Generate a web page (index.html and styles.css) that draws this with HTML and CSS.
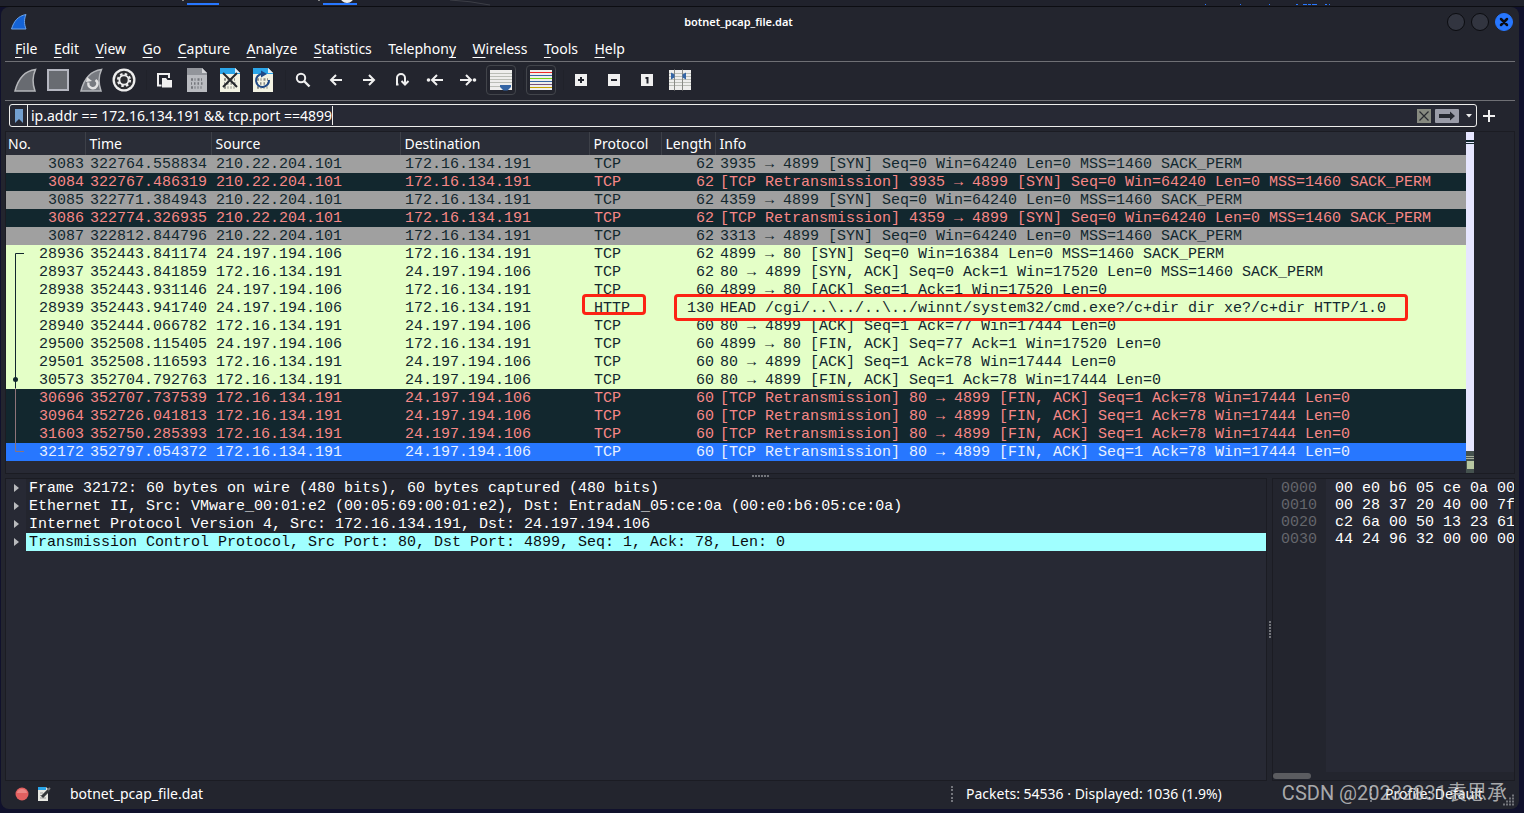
FILE: index.html
```html
<!DOCTYPE html>
<html lang="en">
<head>
<meta charset="utf-8">
<title>botnet_pcap_file.dat</title>
<link rel="stylesheet" href="styles.css">
</head>
<body>
<div class="desktop-strip" aria-hidden="true">
  <svg width="720" height="7" viewBox="0 0 720 7"><path d="M187 4h32M323 4h34" stroke="#2777ff" stroke-width="2"/><circle cx="347" cy="-4" r="7" fill="#eee"/><path d="M450 0q20 1 40 5" stroke="#3c3e46" fill="none"/><path d="M182 0h2M318 0h2" stroke="#888" stroke-width="2"/></svg>
  <svg width="324" height="7" viewBox="0 0 324 7"><path d="M5 4.500h1M40 4.500h1M69 4.500h1M96 4.500h2M103 4.500h4M108 4.500h3M112 4.500h5M125 4.500h2M129 4.500h1" stroke="#2777ff"/></svg>
</div>
<main class="window">
  <header class="titlebar">
    <svg class="app-icon" width="18" height="18" viewBox="0 0 18 18"><path d="M1.500 16C4 8 8 3 16 1.500C14 6 14 11 16 16Z" fill="#1463d6" stroke="#6da3e8"/></svg>
    <h1 class="title">botnet_pcap_file.dat</h1>
    <div class="controls">
      <button class="ctl" aria-label="Minimize"></button>
      <button class="ctl" aria-label="Maximize"></button>
      <button class="ctl close" aria-label="Close"><svg width="10" height="10" viewBox="0 0 10 10"><path d="M2 2l6 6M8 2l-6 6" stroke="#0b0d14" stroke-width="2.500" stroke-linecap="round"/></svg></button>
    </div>
  </header>
  <nav class="menu">
    <div class="menu-items">
      <button><u>F</u>ile</button><button><u>E</u>dit</button><button><u>V</u>iew</button><button><u>G</u>o</button><button><u>C</u>apture</button><button><u>A</u>nalyze</button><button><u>S</u>tatistics</button><button>Telephon<u>y</u></button><button><u>W</u>ireless</button><button><u>T</u>ools</button><button><u>H</u>elp</button>
    </div>
  </nav>
  <div class="toolbar">
    <button aria-label="Start capture"><svg width="24" height="24" viewBox="0 0 24 24"><path d="M2 23C5 11 11 3 22.500 1.500C19.500 8 19.500 16 22 23Z" fill="#686b71" stroke="#b4b6ba" stroke-width="1.500"/></svg></button>
    <button aria-label="Stop capture"><svg width="24" height="24" viewBox="0 0 24 24"><path d="M2 2h20v20H2z" fill="#686b71" stroke="#b4b6c0" stroke-width="2"/></svg></button>
    <button aria-label="Restart capture"><svg width="24" height="24" viewBox="0 0 24 24"><path d="M2 23C5 11 11 3 22.500 1.500C19.500 8 19.500 16 22 23Z" fill="#777a80" stroke="#b4b6ba" stroke-width="1.500"/><path d="M9.500 14.500a4.500 4.500 0 1 0 7-2.500" fill="none" stroke="#e2e2e2" stroke-width="2.400"/><path d="M7 14l1-5 5 4z" fill="#e2e2e2"/></svg></button>
    <button aria-label="Capture options"><svg width="24" height="24" viewBox="0 0 24 24"><circle cx="12" cy="12" r="11.500" fill="#eee"/><circle cx="12" cy="12" r="9.200" fill="#2c2d30"/><circle cx="12" cy="12" r="6" fill="none" stroke="#eee" stroke-width="2.200" stroke-dasharray="2.500 2.212"/><circle cx="12" cy="12" r="4.600" fill="none" stroke="#eee" stroke-width="1.800"/></svg></button>
    <span class="sep"></span>
    <button aria-label="Open"><svg width="24" height="24" viewBox="0 0 24 24"><path d="M9.500 17.500H6V6h11v4" fill="none" stroke="#f0f0f0" stroke-width="2"/><path d="M10 10h4l1.500 2H20v7.500H10z" fill="#f0f0f0"/></svg></button>
    <button aria-label="Save"><svg width="24" height="24" viewBox="0 0 24 24"><path d="M2 0h15l5 5v19H2z" fill="#b9bbc0"/><path d="M2 0h15v5h5v2H2z" fill="#92959b"/><path d="M17 0l5 5h-5z" fill="#d5d6d9"/><path d="M6 11.500h2m1.500 0h1m2 0h2m1.500 0h1M6 15.500h1m2 0h1.500m2 0h1.500m2 0h1.500M6 19.500h2m1.500 0h1m2 0h1m2 0h1" stroke="#74777c" stroke-width="2.600"/></svg></button>
    <button aria-label="Close file"><svg width="24" height="24" viewBox="0 0 24 24"><path d="M2 0h15l5 5v19H2z" fill="#f3f3e3"/><path d="M2 0h15v5h5v1H2z" fill="#2ba5e8"/><path d="M17 0l5 5h-5z" fill="#dff0f8"/><path d="M6 11.500h2m1.500 0h1m2 0h2m1.500 0h1M6 15.500h1m2 0h1.500m2 0h1.500m2 0h1.500M6 19.500h2m1.500 0h1m2 0h1m2 0h1" stroke="#8c8d87" stroke-width="2.600"/><path d="M5 5l14 14M19 5L5 19" stroke="#25282b" stroke-width="2"/></svg></button>
    <button aria-label="Reload"><svg width="24" height="24" viewBox="0 0 24 24"><path d="M2 0h15l5 5v19H2z" fill="#f3f3e3"/><path d="M2 0h15v5h5v1H2z" fill="#2ba5e8"/><path d="M17 0l5 5h-5z" fill="#dff0f8"/><path d="M6 11.500h2m1.500 0h1m2 0h2m1.500 0h1M6 15.500h1m2 0h1.500m2 0h1.500m2 0h1.500M6 19.500h2m1.500 0h1m2 0h1m2 0h1" stroke="#8c8d87" stroke-width="2.600"/><path d="M11 6a6.500 6.500 0 1 0 7 6" fill="none" stroke="#204a87" stroke-width="2"/><path d="M10 2.500l6 3.500-6 3.500z" fill="#204a87"/></svg></button>
    <span class="sep"></span>
    <button aria-label="Find"><svg width="24" height="24" viewBox="0 0 24 24"><circle cx="10" cy="10" r="4.200" fill="none" stroke="#f0f0f0" stroke-width="2"/><path d="M13 13l5.500 5.500" stroke="#f0f0f0" stroke-width="2.400"/></svg></button>
    <button aria-label="Previous"><svg width="24" height="24" viewBox="0 0 24 24"><path d="M18 12H7.500M12 7l-5 5 5 5" fill="none" stroke="#f0f0f0" stroke-width="2"/></svg></button>
    <button aria-label="Next"><svg width="24" height="24" viewBox="0 0 24 24"><path d="M6 12h10.500M12 7l5 5-5 5" fill="none" stroke="#f0f0f0" stroke-width="2"/></svg></button>
    <button aria-label="Go to packet"><svg width="24" height="24" viewBox="0 0 24 24"><path d="M8.500 16.500H7V10a4 4 0 0 1 8 0v6M11.500 13l3.500 3.500 3.500-3.500" fill="none" stroke="#f0f0f0" stroke-width="2"/></svg></button>
    <button aria-label="First packet"><svg width="24" height="24" viewBox="0 0 24 24"><circle cx="5.500" cy="12" r="1.800" fill="#f0f0f0"/><path d="M20 12H10M14 7l-5 5 5 5" fill="none" stroke="#f0f0f0" stroke-width="2"/></svg></button>
    <button aria-label="Last packet"><svg width="24" height="24" viewBox="0 0 24 24"><circle cx="18.500" cy="12" r="1.800" fill="#f0f0f0"/><path d="M4 12h10M10 7l5 5-5 5" fill="none" stroke="#f0f0f0" stroke-width="2"/></svg></button>
    <button class="on" aria-label="Auto scroll"><svg width="24" height="24" viewBox="0 0 24 24"><path d="M1 2h22v20H1z" fill="#eeeeec"/><path d="M1 5.500h22M1 8.500h22M1 11.500h22M1 14.500h22M1 18.500h10" stroke="#babdb6"/><path d="M11 17h11v2l-3.500 3.500h-4L11 19z" fill="#3465a4"/></svg></button>
    <span class="sep"></span>
    <button class="on" aria-label="Colorize"><svg width="24" height="24" viewBox="0 0 24 24"><path d="M1 2h22v20H1z" fill="#eeeeec"/><path d="M1 4h22v1H1z" fill="#ef2929"/><path d="M1 7h22v1H1zM1 13h22v1H1z" fill="#3465a4"/><path d="M1 10h22v1H1z" fill="#73d216"/><path d="M1 16h22v1H1z" fill="#75507b"/><path d="M1 19h22v1H1z" fill="#c4a000"/></svg></button>
    <span class="sep"></span>
    <button aria-label="Zoom in"><svg width="24" height="24" viewBox="0 0 24 24"><path d="M6 6h12v12H6z" fill="#f0f0f0"/><path d="M9 12h6M12 9v6" stroke="#22242d" stroke-width="2"/></svg></button>
    <button aria-label="Zoom out"><svg width="24" height="24" viewBox="0 0 24 24"><path d="M6 6h12v12H6z" fill="#f0f0f0"/><path d="M9 12h6" stroke="#22242d" stroke-width="2"/></svg></button>
    <button aria-label="Normal size"><svg width="24" height="24" viewBox="0 0 24 24"><path d="M6 6h12v12H6z" fill="#f0f0f0"/><path d="M10.500 10h2v5.500" fill="none" stroke="#22242d" stroke-width="2"/></svg></button>
    <button aria-label="Resize columns"><svg width="24" height="24" viewBox="0 0 24 24"><path d="M1 2h22v20H1z" fill="#eeeeec"/><path d="M1 5.500h22M1 8.500h22M1 11.500h22M1 14.500h22M1 17.500h22" stroke="#babdb6"/><path d="M6.500 1.500v21M14.500 1.500v21" stroke="#888a85"/><path d="M3 4.500l3.500 2v3L3 11.500zM18 4.500l-3.500 2v3l3.500 2z" fill="#3465a4"/></svg></button>
  </div>
  <div class="filterbar">
    <div class="filterbox">
      <button class="bookmark" aria-label="Bookmarks"><svg width="10" height="14" viewBox="0 0 10 14"><path d="M1 0h8v14L5 10 1 14z" fill="#729fcf"/></svg></button>
      <input class="filter" type="text" aria-label="Display filter" value="ip.addr == 172.16.134.191 &amp;&amp; tcp.port ==4899">
      <button class="right" aria-label="Clear"><svg width="14" height="14" viewBox="0 0 14 14"><path d="M0 0h14v14H0z" fill="#878a80"/><path d="M2.500 2.500l9 9M11.500 2.500l-9 9" stroke="#292b30" stroke-width="1.200"/></svg></button>
      <button aria-label="Apply"><svg width="24" height="14" viewBox="0 0 24 14"><rect width="24" height="14" rx="1" fill="#9a9ca8"/><path d="M4 5h11V2.500L20 7l-5 4.500V9H4z" fill="#252830"/></svg></button>
      <button class="recent" aria-label="Recent filters"><svg width="8" height="6" viewBox="0 0 8 6"><path d="M1 1h6L4 4.500z" fill="#eee"/></svg></button>
    </div>
    <button aria-label="Add filter"><svg width="14" height="14" viewBox="0 0 14 14"><path d="M1 7h12M7 1v12" stroke="#f0f0f0" stroke-width="2"/></svg></button>
  </div>
  <section class="packets" aria-label="Packet list">
    <div class="list">
      <table>
        <colgroup><col class="c-no"><col class="c-time"><col class="c-addr"><col class="c-addr"><col class="c-proto"><col class="c-len"><col></colgroup>
        <thead><tr><th>No.</th><th>Time</th><th>Source</th><th>Destination</th><th>Protocol</th><th>Length</th><th>Info</th></tr></thead>
        <tbody>
          <tr class="syn"><td>3083</td><td>322764.558834</td><td>210.22.204.101</td><td>172.16.134.191</td><td>TCP</td><td>62</td><td>3935 → 4899 [SYN] Seq=0 Win=64240 Len=0 MSS=1460 SACK_PERM</td></tr>
          <tr class="bad"><td>3084</td><td>322767.486319</td><td>210.22.204.101</td><td>172.16.134.191</td><td>TCP</td><td>62</td><td>[TCP Retransmission] 3935 → 4899 [SYN] Seq=0 Win=64240 Len=0 MSS=1460 SACK_PERM</td></tr>
          <tr class="syn"><td>3085</td><td>322771.384943</td><td>210.22.204.101</td><td>172.16.134.191</td><td>TCP</td><td>62</td><td>4359 → 4899 [SYN] Seq=0 Win=64240 Len=0 MSS=1460 SACK_PERM</td></tr>
          <tr class="bad"><td>3086</td><td>322774.326935</td><td>210.22.204.101</td><td>172.16.134.191</td><td>TCP</td><td>62</td><td>[TCP Retransmission] 4359 → 4899 [SYN] Seq=0 Win=64240 Len=0 MSS=1460 SACK_PERM</td></tr>
          <tr class="syn"><td>3087</td><td>322812.844796</td><td>210.22.204.101</td><td>172.16.134.191</td><td>TCP</td><td>62</td><td>3313 → 4899 [SYN] Seq=0 Win=64240 Len=0 MSS=1460 SACK_PERM</td></tr>
          <tr class="http"><td>28936</td><td>352443.841174</td><td>24.197.194.106</td><td>172.16.134.191</td><td>TCP</td><td>62</td><td>4899 → 80 [SYN] Seq=0 Win=16384 Len=0 MSS=1460 SACK_PERM</td></tr>
          <tr class="http"><td>28937</td><td>352443.841859</td><td>172.16.134.191</td><td>24.197.194.106</td><td>TCP</td><td>62</td><td>80 → 4899 [SYN, ACK] Seq=0 Ack=1 Win=17520 Len=0 MSS=1460 SACK_PERM</td></tr>
          <tr class="http"><td>28938</td><td>352443.931146</td><td>24.197.194.106</td><td>172.16.134.191</td><td>TCP</td><td>60</td><td>4899 → 80 [ACK] Seq=1 Ack=1 Win=17520 Len=0</td></tr>
          <tr class="http"><td>28939</td><td>352443.941740</td><td>24.197.194.106</td><td>172.16.134.191</td><td>HTTP</td><td>130</td><td>HEAD /cgi/..\../..\../winnt/system32/cmd.exe?/c+dir dir xe?/c+dir HTTP/1.0</td></tr>
          <tr class="http"><td>28940</td><td>352444.066782</td><td>172.16.134.191</td><td>24.197.194.106</td><td>TCP</td><td>60</td><td>80 → 4899 [ACK] Seq=1 Ack=77 Win=17444 Len=0</td></tr>
          <tr class="http"><td>29500</td><td>352508.115405</td><td>24.197.194.106</td><td>172.16.134.191</td><td>TCP</td><td>60</td><td>4899 → 80 [FIN, ACK] Seq=77 Ack=1 Win=17520 Len=0</td></tr>
          <tr class="http"><td>29501</td><td>352508.116593</td><td>172.16.134.191</td><td>24.197.194.106</td><td>TCP</td><td>60</td><td>80 → 4899 [ACK] Seq=1 Ack=78 Win=17444 Len=0</td></tr>
          <tr class="http"><td>30573</td><td>352704.792763</td><td>172.16.134.191</td><td>24.197.194.106</td><td>TCP</td><td>60</td><td>80 → 4899 [FIN, ACK] Seq=1 Ack=78 Win=17444 Len=0</td></tr>
          <tr class="bad"><td>30696</td><td>352707.737539</td><td>172.16.134.191</td><td>24.197.194.106</td><td>TCP</td><td>60</td><td>[TCP Retransmission] 80 → 4899 [FIN, ACK] Seq=1 Ack=78 Win=17444 Len=0</td></tr>
          <tr class="bad"><td>30964</td><td>352726.041813</td><td>172.16.134.191</td><td>24.197.194.106</td><td>TCP</td><td>60</td><td>[TCP Retransmission] 80 → 4899 [FIN, ACK] Seq=1 Ack=78 Win=17444 Len=0</td></tr>
          <tr class="bad"><td>31603</td><td>352750.285393</td><td>172.16.134.191</td><td>24.197.194.106</td><td>TCP</td><td>60</td><td>[TCP Retransmission] 80 → 4899 [FIN, ACK] Seq=1 Ack=78 Win=17444 Len=0</td></tr>
          <tr class="selected"><td>32172</td><td>352797.054372</td><td>172.16.134.191</td><td>24.197.194.106</td><td>TCP</td><td>60</td><td>[TCP Retransmission] 80 → 4899 [FIN, ACK] Seq=1 Ack=78 Win=17444 Len=0</td></tr>
        </tbody>
      </table>
      <svg class="related" width="12" height="208" viewBox="0 0 12 208"><path d="M11 4.500H2.500V139" fill="none" stroke="#12272e"/><path d="M2.500 139V202.500H11" fill="none" stroke="#8e7479"/><circle cx="2.500" cy="130.500" r="2.500" fill="#12272e"/></svg>
      <span class="mark mark-proto"></span>
      <span class="mark mark-info"></span>
    </div>
    <svg class="minimap" width="8" height="341" viewBox="0 0 8 341"><path d="M0 0h8v341H0z" fill="#e6e6ff"/><path d="M0 8h8v2H0zM0 11h8v1H0z" fill="#12272e"/><path d="M0 319h8v22H0z" fill="#45524f"/><path d="M0 324.500h8M0 326.500h8" stroke="#a9b09e"/><path d="M1 329h7v8H1z" fill="#b7c6a1"/></svg>
    <div class="scroll-gutter"></div>
  </section>
  <div class="split-h"><i></i><i></i><i></i><i></i><i></i><i></i></div>
  <div class="lower">
    <section class="details" aria-label="Packet details">
      <ul>
        <li><span>Frame 32172: 60 bytes on wire (480 bits), 60 bytes captured (480 bits)</span></li>
        <li><span>Ethernet II, Src: VMware_00:01:e2 (00:05:69:00:01:e2), Dst: EntradaN_05:ce:0a (00:e0:b6:05:ce:0a)</span></li>
        <li><span>Internet Protocol Version 4, Src: 172.16.134.191, Dst: 24.197.194.106</span></li>
        <li class="current"><span>Transmission Control Protocol, Src Port: 80, Dst Port: 4899, Seq: 1, Ack: 78, Len: 0</span></li>
      </ul>
    </section>
    <div class="split-v"><i></i><i></i><i></i><i></i><i></i><i></i></div>
    <section class="hex" aria-label="Packet bytes">
      <div class="hexbody">
        <pre class="offsets">0000
0010
0020
0030</pre>
        <pre class="bytes">00 e0 b6 05 ce 0a 00
00 28 37 20 40 00 7f
c2 6a 00 50 13 23 61
44 24 96 32 00 00 00</pre>
      </div>
      <div class="hscroll"></div>
    </section>
  </div>
  <footer class="status">
    <button aria-label="Expert information"><svg width="14" height="14" viewBox="0 0 14 14"><circle cx="7" cy="7" r="6.500" fill="#e26060"/><path d="M2 6a5 4 0 0 1 10 0z" fill="#ec8684"/></svg></button>
    <button aria-label="Capture comments"><svg width="14" height="14" viewBox="0 0 14 14"><path d="M1 0h8l2 2v12H1z" fill="#e8e8e2"/><path d="M1 0h8v3H1z" fill="#2ba5e8"/><path d="M3 6h3M3 8.500h2M3 11h6" stroke="#999"/><path d="M5 10l7-7" stroke="#34373a" stroke-width="3"/><path d="M11 3l2-2" stroke="#777" stroke-width="2"/></svg></button>
    <span class="file">botnet_pcap_file.dat</span>
    <span class="counts">Packets: 54536 · Displayed: 1036 (1.9%)</span>
    <span class="profile">Profile: Default</span>
    <svg class="grip" width="12" height="12" viewBox="0 0 12 12"><path d="M9 1.500h2M6 4.500h5M3 7.500h8M0 10.500h11" stroke="#73757b" stroke-width="2" stroke-dasharray="2 1"/></svg>
  </footer>
</main>
<div class="watermark">CSDN @20232831袁思承</div>
</body>
</html>
```

FILE: styles.css
```css
* { box-sizing: border-box; }
body {
  margin: 0;
  height: 100vh;
  display: flex;
  flex-direction: column;
  overflow: hidden;
  background: #10112c;
  color: #fff;
  font: 14px/20px "Noto Sans", sans-serif;
}
button {
  display: flex;
  align-items: center;
  justify-content: center;
  margin: 0;
  padding: 0;
  border: 0;
  background: none;
  color: inherit;
  font: inherit;
}
svg { display: block; flex: none; }
.desktop-strip {
  display: flex;
  justify-content: space-between;
  height: 7px;
  background: #20222c;
  border-bottom: 1px solid #0c0d12;
}
.window {
  flex: 1;
  min-height: 0;
  display: flex;
  flex-direction: column;
  margin: 0 5px 4px 1px;
  padding: 0 4px;
  background: #23252e;
  border-radius: 8px;
}
.titlebar {
  display: grid;
  grid-template-columns: 1fr auto 1fr;
  align-items: center;
  height: 30px;
  padding: 0 2px 0 5px;
}
.title { margin: 0; padding-right: 46px; font-size: 11px; font-weight: 600; line-height: 20px; }
.controls { display: flex; justify-content: flex-end; gap: 6px; }
.ctl {
  width: 18px;
  height: 18px;
  border: 1px solid #0b0c10;
  border-radius: 50%;
  background: #323540;
}
.ctl.close { background: #2777ff; border-color: #2777ff; }
.menu {
  height: 25px;
  padding: 2px 10px 0;
  border-bottom: 1px solid #6f7075;
}
.menu-items { display: flex; justify-content: space-between; max-width: 610px; }
.menu button { display: block; }
.menu u { text-underline-offset: 3px; text-decoration-thickness: 1px; }
.toolbar {
  display: flex;
  align-items: center;
  height: 39px;
  padding: 0 3px 2px;
  border-bottom: 1px solid #6f7075;
}
.toolbar button { width: 33px; height: 30px; }
.toolbar .on svg { outline: 1px solid #42454b; outline-offset: 2px; border-radius: 1px; }
.sep { width: 7px; height: 20px; border-right: 1px solid #20222a; }
.filterbar {
  display: flex;
  gap: 5px;
  padding: 3px 19px 4px 4px;
}
.filterbox {
  flex: 1;
  display: flex;
  align-items: center;
  height: 23px;
  gap: 4px;
  padding-right: 3px;
  border: 1px solid #eeeeec;
  border-radius: 3px;
  background: #272934;
}
.bookmark { width: 18px; height: 21px; border-right: 1px solid #eeeeec; }
.filter {
  field-sizing: content;
  height: 19px;
  margin-left: -1px;
  padding: 0;
  border: 0;
  border-right: 1px solid #eeeeec;
  background: none;
  color: #fff;
  font: inherit;
}
.right { margin-left: auto; }
.recent { margin-left: 2px; }
.packets {
  display: flex;
  border: 1px solid #1b1c23;
  background: #272934;
}
.list { flex: 1; position: relative; min-width: 0; }
table {
  width: 100%;
  table-layout: fixed;
  border-collapse: collapse;
  font: 15px/16px "Liberation Mono", monospace;
}
.c-no { width: 79px; }
.c-time { width: 126px; }
.c-addr { width: 189px; }
.c-proto { width: 72px; }
.c-len { width: 54px; }
th {
  height: 23px;
  padding: 0 3px 0 4px;
  border-left: 1px solid #3d4048;
  background: #2a2d37;
  font: 14px/20px "Noto Sans", sans-serif;
  text-align: left;
}
th:first-child { border-left: 0; padding-left: 2px; }
td { height: 18px; padding: 2px 0 0 5px; white-space: pre; overflow: hidden; }
td:first-child, td:nth-child(6) { padding: 2px 1px 0 0; text-align: right; }
.syn { background: #a0a0a0; color: #12272e; }
.bad { background: #12272e; color: #f78787; }
.http { background: #e4ffc7; color: #12272e; }
.selected { background: #2777ff; color: #e8f0ff; }
.related { position: absolute; left: 7px; top: 117px; }
.mark { position: absolute; border: 3px solid #fc2314; border-radius: 4px; }
.mark-proto { left: 576px; top: 162px; width: 64px; height: 21px; }
.mark-info { left: 668px; top: 162px; width: 734px; height: 27px; }
.scroll-gutter { width: 40px; background: #23252e; }
.split-h { display: flex; justify-content: center; align-items: center; gap: 1px; height: 4px; }
.split-v { display: flex; flex-direction: column; justify-content: center; align-items: center; gap: 1px; width: 5px; }
.split-h i, .split-v i { width: 2px; height: 2px; background: #73757b; }
.lower { flex: 1; display: flex; min-height: 0; }
.details {
  flex: 1;
  min-width: 0;
  border: 1px solid #1b1c23;
  background: #272934;
  font: 15px/16px "Liberation Mono", monospace;
}
.details ul { margin: 0; padding: 0; list-style: none; }
.details li { display: flex; align-items: center; }
.details li::before {
  content: "";
  margin: 0 7px 0 8px;
  border-left: 5px solid #b9babd;
  border-top: 4px solid transparent;
  border-bottom: 4px solid transparent;
}
.details span { flex: 1; padding: 2px 0 0 3px; background: #23252e; white-space: pre; }
.details .current span { background: #a0ffff; color: #0b0c10; }
.hex {
  display: flex;
  flex-direction: column;
  width: 243px;
  border: 1px solid #1b1c23;
  background: #23252e;
}
.hexbody { flex: 1; display: flex; }
pre { margin: 0; font: 15px/17px "Liberation Mono", monospace; }
.offsets { padding: 1px 9px 0 8px; color: #65676c; }
.bytes { flex: 1; min-width: 0; overflow: hidden; padding: 1px 0 0 9px; background: #272934; }
.hscroll { width: 38px; height: 6px; margin: 1px 0; border-radius: 3px; background: #5b5c60; }
.status {
  display: flex;
  align-items: center;
  height: 28px;
  padding: 0 0 3px 10px;
  gap: 8px;
}
.file { flex: 1; padding-left: 11px; }
.counts, .profile { padding-left: 13px; border-left: 2px dotted #73757b; line-height: 16px; white-space: nowrap; }
.counts { width: 411px; }
.profile { width: 125px; }
.grip { align-self: flex-end; }
.watermark {
  position: absolute;
  right: 17px;
  bottom: 8px;
  color: rgba(205, 205, 205, 0.8);
  font: 20px/24px Roboto, "Noto Sans CJK SC", sans-serif;
}
```
